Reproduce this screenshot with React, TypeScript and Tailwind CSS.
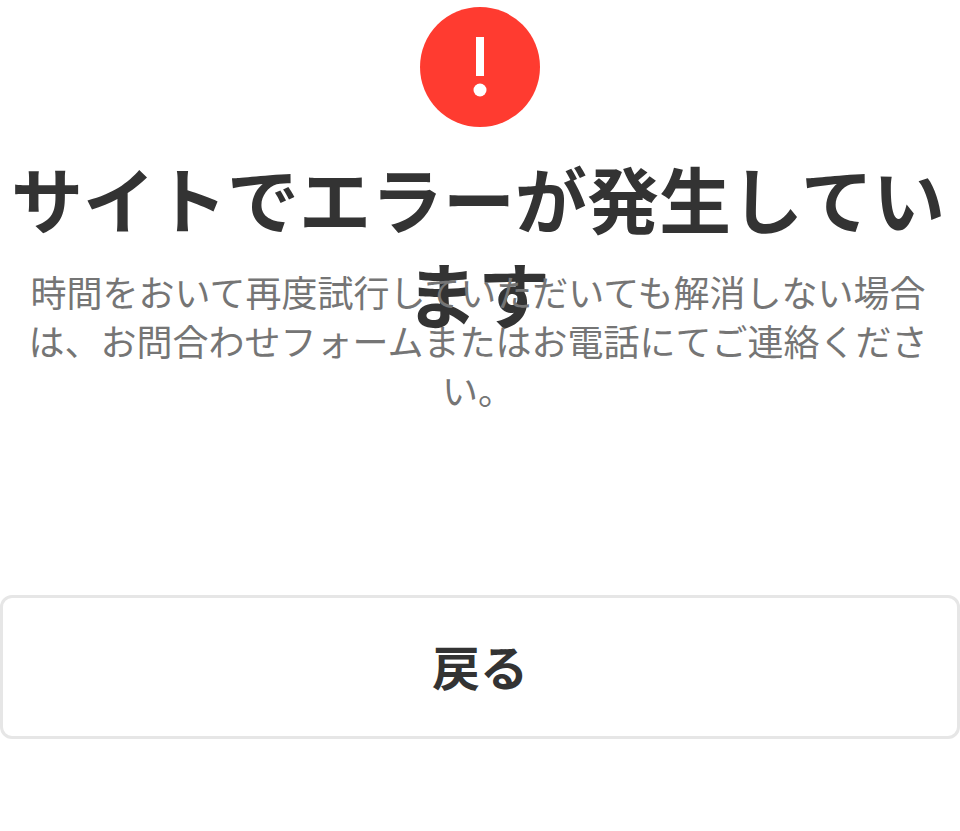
export default function App() {
  return (
    <main className="flex h-[831px] flex-col items-center bg-white font-['Noto_Sans_CJK_JP','Noto_Sans',sans-serif] antialiased">
      <div className="mt-[7px] flex h-[120px] w-[120px] items-center justify-center rounded-full bg-[#ff3b30]">
        <svg width="120" height="120" viewBox="0 0 120 120">
          <rect x="56" y="30" width="8" height="39" fill="#fff" />
          <circle cx="60" cy="83" r="6.5" fill="#fff" />
        </svg>
      </div>
      <h1 className="mt-[22px] h-[95px] w-full pr-[4px] text-center text-[72px] leading-[95px] font-bold text-[#333]">
        サイトでエラーが発生しています
      </h1>
      <p className="mt-[23px] w-full pr-[32px] pl-[28px] text-center text-[36px] leading-[49px] text-[#757575]">
        時間をおいて再度試行していただいても解消しない場合は、お問合わせフォームまたはお電話にてご連絡ください。
      </p>
      <button className="mt-[181px] flex h-[144px] w-full items-center justify-center rounded-[12px] border-[3px] border-[#e6e6e6] bg-white pb-[4px] text-[48px] font-bold text-[#333]">
        戻る
      </button>
    </main>
  );
}
